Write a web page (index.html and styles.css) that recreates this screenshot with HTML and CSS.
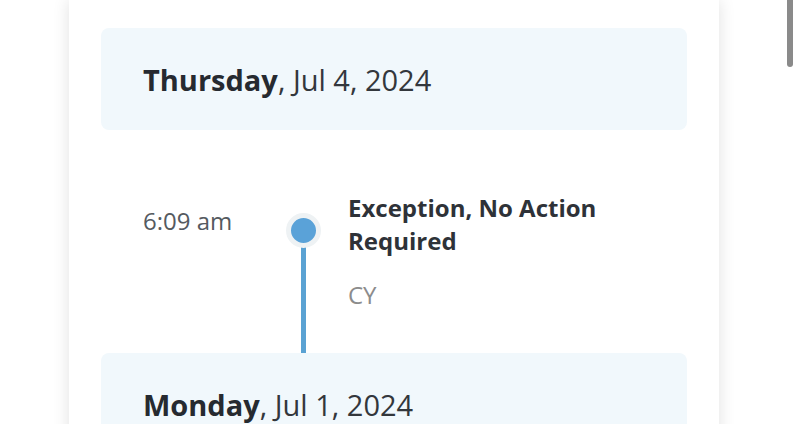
FILE: index.html
```html
<!DOCTYPE html>
<html>
<head>
    <title>Tracking History</title>
    <link rel="stylesheet" href="styles.css">
</head>
<body>
    <div class="page">
        <div class="card">
            <div class="day-header"><span class="weekday">Thursday</span>, Jul 4, 2024</div>

            <div class="event">
                <div class="event-time">6:09 am</div>
                <div class="event-marker">
                    <span class="dot"></span>
                    <span class="line"></span>
                </div>
                <div class="event-body">
                    <div class="event-title">Exception, No Action Required</div>
                    <div class="event-location">CY</div>
                </div>
            </div>

            <div class="day-header"><span class="weekday">Monday</span>, Jul 1, 2024</div>
            <div class="spacer"></div>
        </div>
    </div>
    <div class="scroll-thumb"></div>
</body>
</html>
```

FILE: styles.css
```css
html, body { margin: 0; padding: 0; }
body {
    font-family: "Open Sans", "Noto Sans", sans-serif;
    background: #fff;
    overflow: hidden;
}
.page { padding-left: 69px; }
.card {
    width: 586px;
    padding: 28px 32px 0 32px;
    background: #fff;
    box-shadow: 0 0 16px rgba(0,0,0,0.12);
    min-height: 500px;
}
.day-header {
    height: 102px;
    display: flex;
    align-items: center;
    padding: 0 42px;
    background: #f1f8fc;
    border-radius: 8px;
    font-size: 29px;
    color: #33373c;
}
.weekday { font-weight: 700; color: #262a30; }
.event {
    display: grid;
    grid-template-columns: 130px 60px 1fr;
    padding: 61px 42px 0 42px;
}
.event-time {
    margin-top: 13px;
    font-size: 24px;
    line-height: 33px;
    color: #555a5f;
}
.event-marker {
    display: flex;
    flex-direction: column;
    align-items: center;
    padding-top: 22px;
}
.dot {
    width: 25px;
    height: 25px;
    border-radius: 50%;
    background: #5aa2d8;
    border: 5px solid #eef2f4;
    flex: none;
    position: relative;
    z-index: 1;
}
.line {
    width: 5px;
    flex: 1;
    margin-top: -8px;
    background: #5aa2d3;
}
.event-body {
    padding: 0 0 44px 15px;
}
.event-title {
    font-size: 24px;
    line-height: 33px;
    font-weight: 700;
    color: #2e3238;
}
.event-location {
    margin-top: 24px;
    font-size: 24px;
    line-height: 28px;
    color: #8c8c8c;
}
.spacer { height: 100px; }
.scroll-thumb {
    position: fixed;
    top: -6px;
    right: 7px;
    width: 6px;
    height: 73px;
    border-radius: 3px;
    background: #8a8a8a;
}
```
